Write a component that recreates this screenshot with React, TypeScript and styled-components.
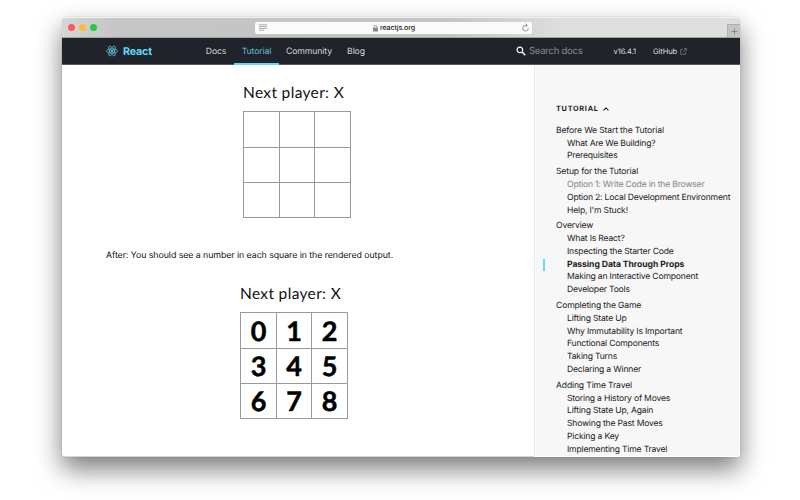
import React from "react";
import styled, { createGlobalStyle } from "styled-components";

const Global = createGlobalStyle`
  * { box-sizing: border-box; }
  html, body { margin: 0; background: #fff; overflow: hidden; }
  body { font-family: Inter, "Liberation Sans", sans-serif; color: #1a1a1a; text-rendering: geometricPrecision; }
`;

const Desktop = styled.div`
  width: 800px;
  height: 500px;
  padding: 17px 60px 0 61.5px;
  overflow: hidden;
  background: #fff;
`;

const BrowserWindow = styled.div`
  width: 678.5px;
  height: 440px;
  border-radius: 3px;
  display: flex;
  flex-direction: column;
  background: #fff;
  box-shadow: 0 12px 26px rgba(0, 0, 0, 0.52), 0 0 1px rgba(0, 0, 0, 0.35);
`;

const TitleBar = styled.header`
  height: 21px;
  flex: none;
  display: grid;
  grid-template-columns: 193.5px 277px 1fr;
  align-items: center;
  border-radius: 3px 3px 0 0;
  border-top: 1px solid #f1f1f1;
  border-bottom: 1px solid #a2a2a3;
  background: linear-gradient(90deg, #d6d6d6 0, #c6c6c8 50px, #c3c3c6 380px, #dededf 500px, #dededf 100%);
`;

const Lights = styled.div`
  display: flex;
  gap: 4px;
  padding-left: 6.5px;
`;

const Light = styled.span<{ $color: string }>`
  width: 7px;
  height: 7px;
  border-radius: 50%;
  background: ${(p) => p.$color};
`;

const AddressBar = styled.div`
  height: 12px;
  display: flex;
  align-items: center;
  justify-content: space-between;
  padding: 0 2px 0 4px;
  border-radius: 2px;
  background: #fafafa;
`;

const Address = styled.span`
  display: flex;
  align-items: center;
  gap: 2px;
  font: 500 7.1px/12px Inter, sans-serif;
  letter-spacing: -0.14px;
  padding-top: 1px;
  color: #222;
`;

const NewTab = styled.div`
  width: 13px;
  height: 13px;
  justify-self: end;
  align-self: end;
  display: grid;
  place-items: center;
  background: #c4c4c4;
  border: solid #b0b0b0;
  border-width: 1px 0 0 1px;
`;

const Nav = styled.nav`
  height: 27px;
  flex: none;
  display: flex;
  background: #20232a;
  border-bottom: 1px solid #55575c;
  padding-left: 44.5px;
`;

const Brand = styled.div`
  width: 92px;
  display: flex;
  align-items: center;
  gap: 5px;
  color: #61dafb;
  font-size: 10.7px;
  font-weight: 700;
  letter-spacing: -0.15px;
`;

const NavLink = styled.a<{ $width: number; $active?: boolean }>`
  width: ${(p) => p.$width}px;
  height: 27px;
  text-align: center;
  line-height: 28px;
  font-size: 8.7px;
  letter-spacing: -0.14px;
  color: ${(p) => (p.$active ? "#61bfdb" : "#d5d6d7")};
  border-bottom: 2px solid ${(p) => (p.$active ? "#61dafb" : "transparent")};
`;

const Search = styled.div`
  margin-left: 142.5px;
  width: 98px;
  display: flex;
  align-items: center;
  gap: 3.5px;
  font-size: 9.7px;
  letter-spacing: -0.35px;
  color: #85878c;
`;

const Meta = styled.a<{ $width: number }>`
  width: ${(p) => p.$width}px;
  display: flex;
  align-items: center;
  gap: 3px;
  padding-top: 1px;
  font-size: 7.6px;
  letter-spacing: -0.1px;
  color: #dedfe0;
`;

const Page = styled.div`
  flex: 1;
  min-height: 0;
  display: flex;
`;

const Article = styled.main`
  width: 472px;
  border-bottom: 1px solid #c9d9de;
  border-radius: 0 0 0 3px;
`;

const Game = styled.section<{ $left: number; $top: number }>`
  padding: ${(p) => p.$top}px 0 0 ${(p) => p.$left}px;
`;

const Status = styled.div`
  height: 20px;
  margin-bottom: 8px;
  font: 400 15.5px/20px Lato, sans-serif;
  letter-spacing: 0.34px;
  color: #111;
  white-space: nowrap;
`;

const Board = styled.div`
  width: 108px;
  height: 107px;
  display: grid;
  grid-template-columns: 35px 34px 35px;
  grid-template-rows: 35px 34px 34px;
  gap: 1px;
  padding: 1px;
  background: #999;
`;

const Square = styled.div`
  display: grid;
  place-items: center;
  background: #fff;
  color: #000;
  font: 700 27px/34px Lato, sans-serif;
  -webkit-text-stroke: 0.5px #000;
`;

const Paragraph = styled.p`
  margin: 30px 0 0 44.5px;
  height: 14px;
  font-size: 8.8px;
  line-height: 16px;
  letter-spacing: -0.065px;
  color: #111;
  white-space: nowrap;
`;

const Sidebar = styled.aside`
  flex: 1;
  background: #f7f7f7;
  border-left: 1px solid #ececec;
  border-right: 1px solid #fff;
  border-bottom: 1px solid #fff;
  border-radius: 0 0 3px 0;
  padding: 36.5px 0 0 8.5px;
  overflow: hidden;
`;

const SidebarTitle = styled.h2`
  display: flex;
  align-items: center;
  gap: 4px;
  height: 14px;
  margin: 0 0 9.2px 13px;
  font-size: 7.3px;
  font-weight: 700;
  letter-spacing: 0.72px;
`;

const Group = styled.section`
  margin-bottom: 2.5px;
`;

const Row = styled.div<{ $sub?: boolean; $active?: boolean; $muted?: boolean }>`
  height: 12.9px;
  line-height: 12.9px;
  padding-left: ${(p) => (p.$sub ? 22 : 11)}px;
  border-left: 2px solid ${(p) => (p.$active ? "#61dafb" : "transparent")};
  font-size: 8.6px;
  font-weight: ${(p) => (p.$active ? 700 : 400)};
  letter-spacing: ${(p) => (p.$active ? -0.06 : p.$sub ? -0.19 : -0.15)}px;
  color: ${(p) => (p.$muted ? "#858585" : "#1c1c1c")};
  white-space: nowrap;
`;

const ReactLogo = () => (
  <svg width="12" height="12" viewBox="-12 -12 24 24" fill="none" stroke="#61dafb" strokeWidth="1.3">
    <circle r="2.1" fill="#61dafb" stroke="none" />
    <ellipse rx="11" ry="4.2" />
    <ellipse rx="11" ry="4.2" transform="rotate(60)" />
    <ellipse rx="11" ry="4.2" transform="rotate(120)" />
  </svg>
);

const ReaderIcon = () => (
  <svg width="8" height="7" viewBox="0 0 8 7" stroke="#999" strokeWidth=".8">
    <path d="M0 .8h8M0 2.6h8M0 4.4h8M0 6.2h5" />
  </svg>
);

const LockIcon = () => (
  <svg width="5" height="7" viewBox="0 0 5 7">
    <path d="M1 3V2a1.5 1.5 0 0 1 3 0v1" fill="none" stroke="#888" strokeWidth=".8" />
    <rect y="2.8" width="5" height="3.7" rx=".4" fill="#888" />
  </svg>
);

const ReloadIcon = () => (
  <svg width="9" height="9" viewBox="0 0 9 9" fill="none" stroke="#777" strokeWidth=".8">
    <path d="M5.9 2.4H4.5A2.8 2.8 0 1 0 7.3 5.2M4.6.6l1.7 1.8-1.7 1.7" />
  </svg>
);

const PlusIcon = () => (
  <svg width="7" height="7" viewBox="0 0 7 7" stroke="#777" strokeWidth=".8">
    <path d="M3.5 .5v6M.5 3.5h6" />
  </svg>
);

const SearchIcon = () => (
  <svg width="10" height="10" viewBox="0 0 10 10" fill="none" stroke="#fff">
    <circle cx="3.9" cy="3.9" r="2.8" strokeWidth="1.2" />
    <path d="M6 6l3.3 3.3" strokeWidth="1.5" />
  </svg>
);

const ExternalIcon = () => (
  <svg width="7" height="7" viewBox="0 0 7 7" fill="none" stroke="#777a80" strokeWidth=".8">
    <path d="M3 1.3H.7v5h5V4M4 .6h2.4V3M6.2.8L2.8 4.2" />
  </svg>
);

const CaretUp = () => (
  <svg width="6" height="4" viewBox="0 0 6 4" fill="none" stroke="#1a1a1a" strokeWidth="1.1">
    <path d="M.5 3.3L3 .9l2.5 2.4" />
  </svg>
);

type Item = { text: string; active?: boolean; muted?: boolean };

const groups: { title: string; items: Item[] }[] = [
  {
    title: "Before We Start the Tutorial",
    items: [{ text: "What Are We Building?" }, { text: "Prerequisites" }],
  },
  {
    title: "Setup for the Tutorial",
    items: [
      { text: "Option 1: Write Code in the Browser", muted: true },
      { text: "Option 2: Local Development Environment" },
      { text: "Help, I'm Stuck!" },
    ],
  },
  {
    title: "Overview",
    items: [
      { text: "What Is React?" },
      { text: "Inspecting the Starter Code" },
      { text: "Passing Data Through Props", active: true },
      { text: "Making an Interactive Component" },
      { text: "Developer Tools" },
    ],
  },
  {
    title: "Completing the Game",
    items: [
      { text: "Lifting State Up" },
      { text: "Why Immutability Is Important" },
      { text: "Functional Components" },
      { text: "Taking Turns" },
      { text: "Declaring a Winner" },
    ],
  },
  {
    title: "Adding Time Travel",
    items: [
      { text: "Storing a History of Moves" },
      { text: "Lifting State Up, Again" },
      { text: "Showing the Past Moves" },
      { text: "Picking a Key" },
      { text: "Implementing Time Travel" },
    ],
  },
];

const cells = [0, 1, 2, 3, 4, 5, 6, 7, 8];

export default function App() {
  return (
    <Desktop>
      <Global />
      <BrowserWindow>
        <TitleBar>
          <Lights>
            <Light $color="#fc5b57" />
            <Light $color="#fdbc2e" />
            <Light $color="#28c940" />
          </Lights>
          <AddressBar>
            <ReaderIcon />
            <Address><LockIcon />reactjs.org</Address>
            <ReloadIcon />
          </AddressBar>
          <NewTab><PlusIcon /></NewTab>
        </TitleBar>
        <Nav>
          <Brand><ReactLogo />React</Brand>
          <NavLink $width={36}>Docs</NavLink>
          <NavLink $width={45} $active>Tutorial</NavLink>
          <NavLink $width={60}>Community</NavLink>
          <NavLink $width={34}>Blog</NavLink>
          <Search><SearchIcon />Search docs</Search>
          <Meta $width={39.5}>v16.4.1</Meta>
          <Meta $width={50}>GitHub <ExternalIcon /></Meta>
        </Nav>
        <Page>
          <Article>
            <Game $left={181.5} $top={18}>
              <Status>Next player: X</Status>
              <Board>{cells.map((n) => <Square key={n} />)}</Board>
            </Game>
            <Paragraph>After: You should see a number in each square in the rendered output.</Paragraph>
            <Game $left={178.5} $top={22}>
              <Status>Next player: X</Status>
              <Board>{cells.map((n) => <Square key={n}>{n}</Square>)}</Board>
            </Game>
          </Article>
          <Sidebar>
            <SidebarTitle>TUTORIAL <CaretUp /></SidebarTitle>
            {groups.map((g) => (
              <Group key={g.title}>
                <Row>{g.title}</Row>
                {g.items.map((i) => (
                  <Row key={i.text} $sub $active={i.active} $muted={i.muted}>{i.text}</Row>
                ))}
              </Group>
            ))}
          </Sidebar>
        </Page>
      </BrowserWindow>
    </Desktop>
  );
}
